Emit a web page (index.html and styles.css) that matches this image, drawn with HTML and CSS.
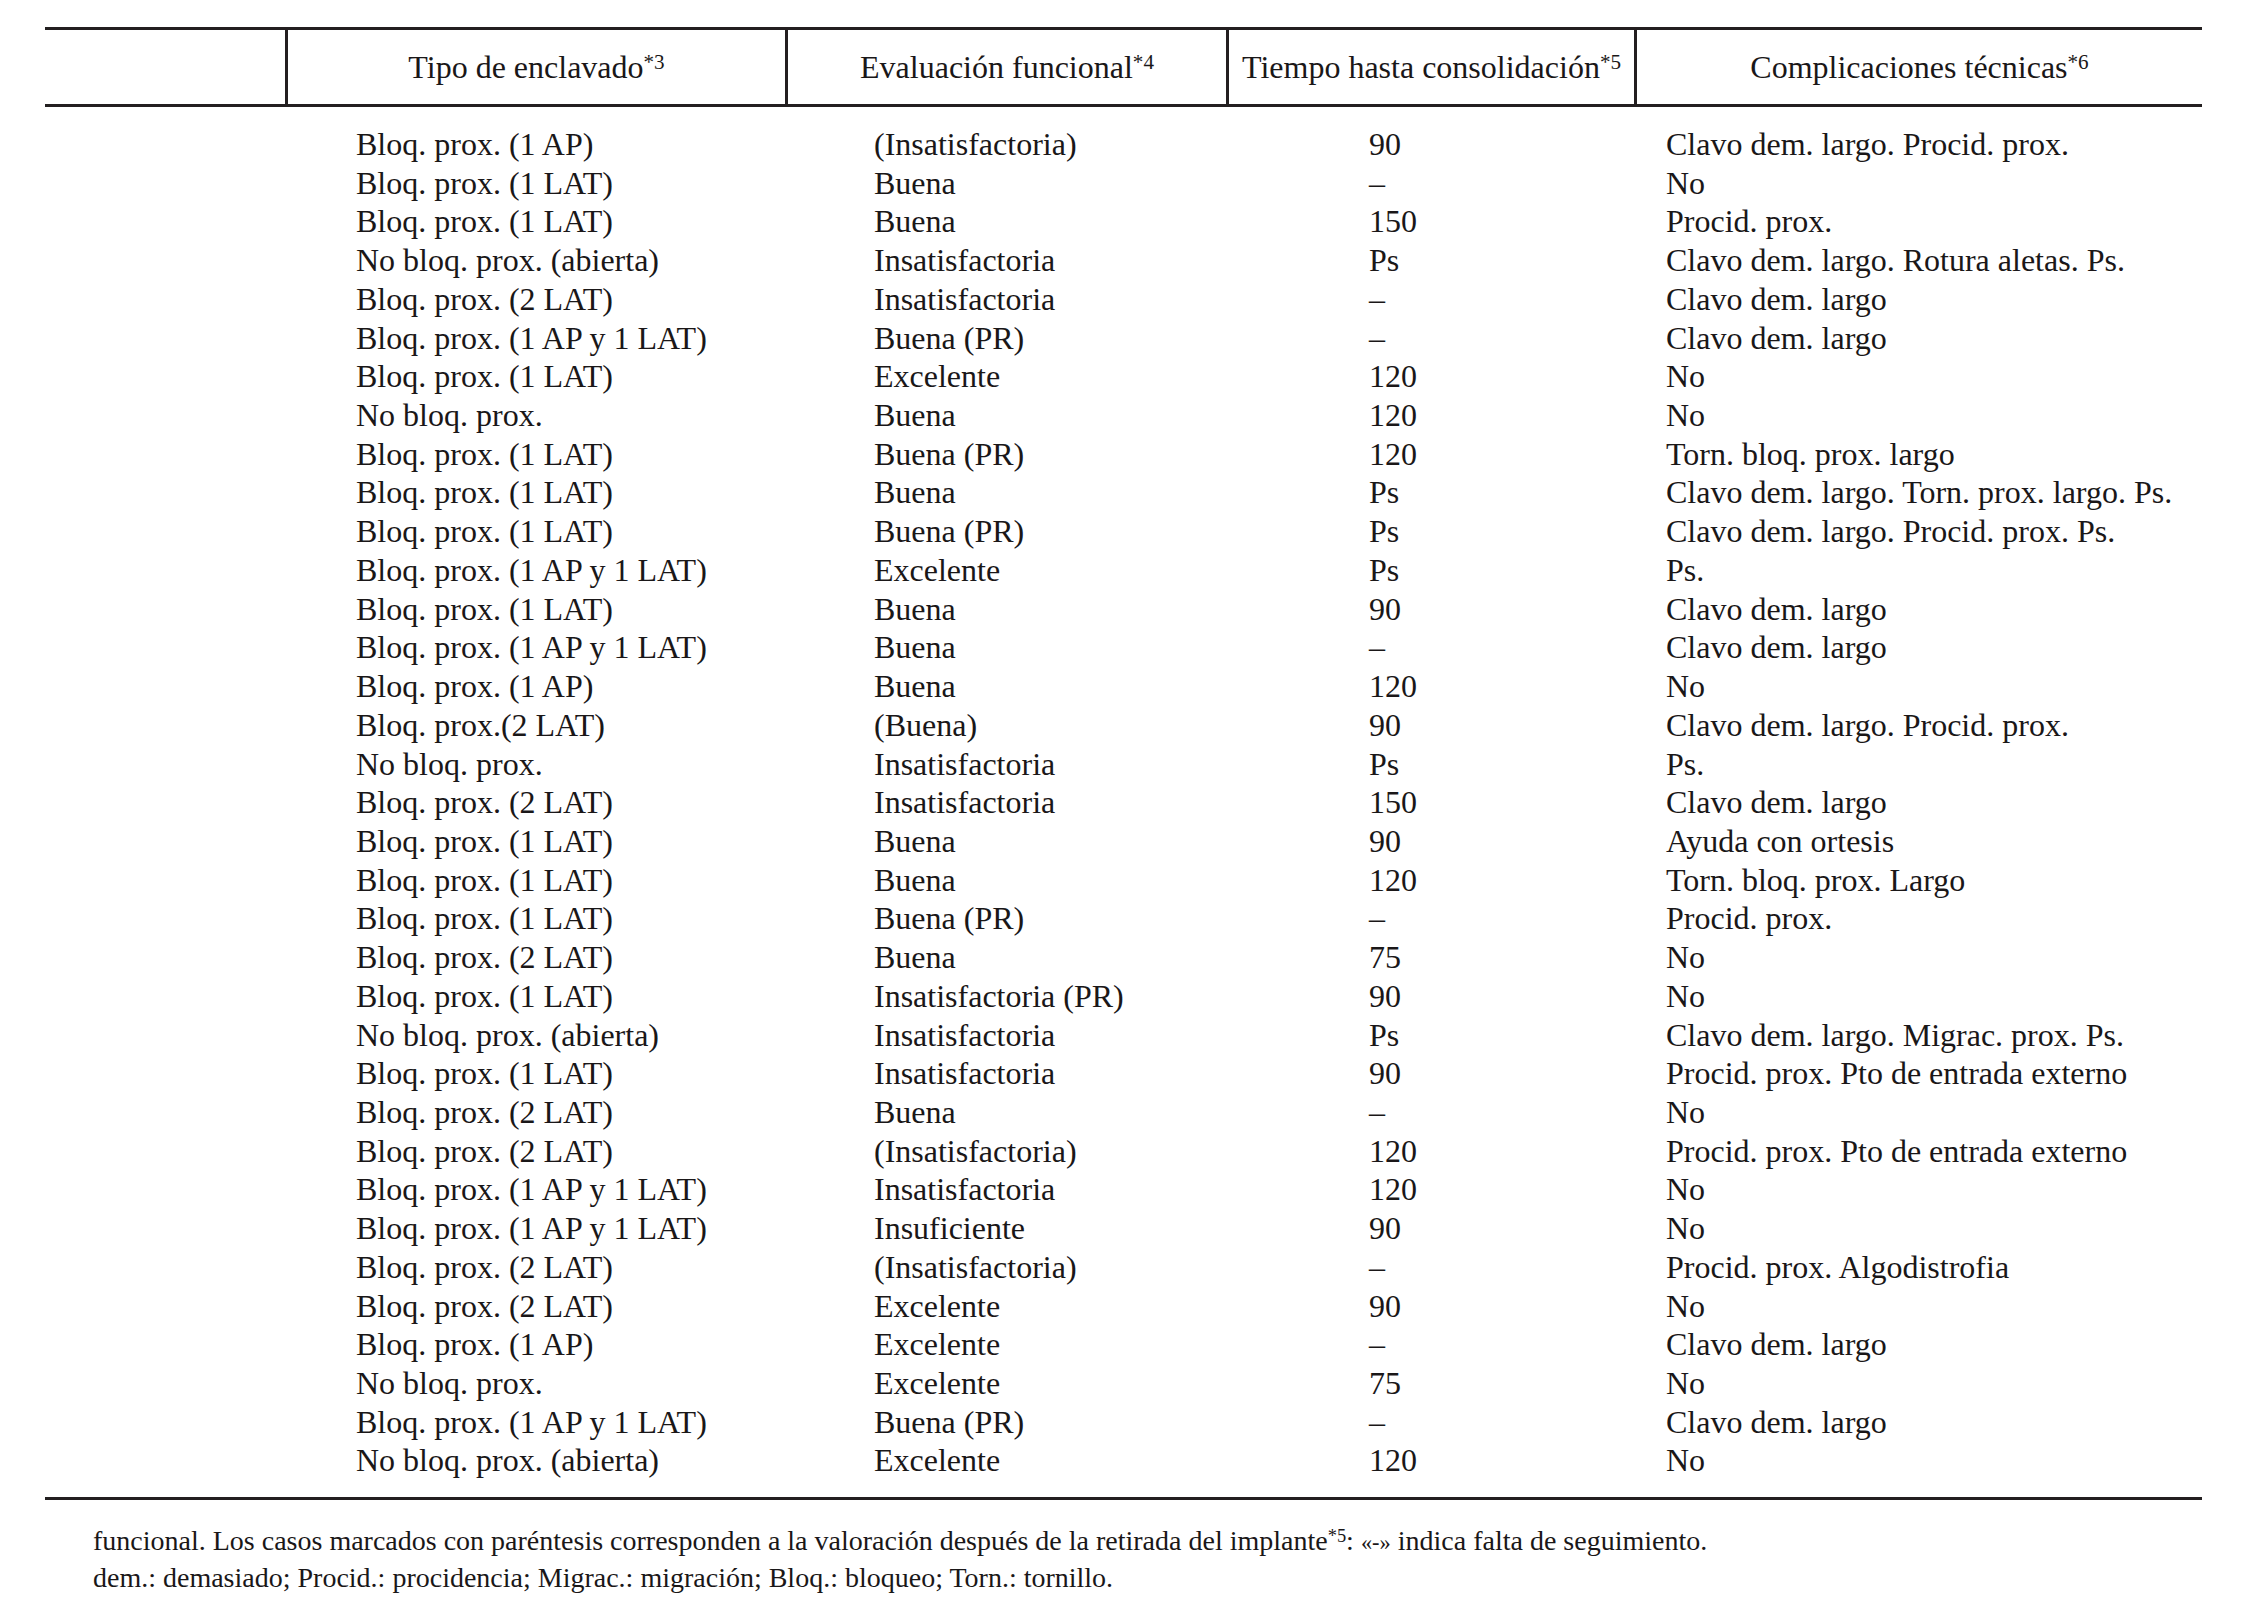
FILE: index.html
```html
<!DOCTYPE html>
<html lang="es">
<head>
<meta charset="utf-8">
<title>Tabla</title>
<link rel="stylesheet" href="styles.css">
</head>
<body>
<div class="page">
  <div class="table">
    <div class="thead">
      <div class="th th-empty"></div>
      <div class="th">Tipo de enclavado<sup>*3</sup></div>
      <div class="th">Evaluación funcional<sup>*4</sup></div>
      <div class="th">Tiempo hasta consolidación<sup>*5</sup></div>
      <div class="th">Complicaciones técnicas<sup>*6</sup></div>
    </div>
    <div class="tbody">
      <div class="tr"><span>Bloq. prox. (1 AP)</span><span>(Insatisfactoria)</span><span>90</span><span>Clavo dem. largo. Procid. prox.</span></div>
      <div class="tr"><span>Bloq. prox. (1 LAT)</span><span>Buena</span><span>–</span><span>No</span></div>
      <div class="tr"><span>Bloq. prox. (1 LAT)</span><span>Buena</span><span>150</span><span>Procid. prox.</span></div>
      <div class="tr"><span>No bloq. prox. (abierta)</span><span>Insatisfactoria</span><span>Ps</span><span>Clavo dem. largo. Rotura aletas. Ps.</span></div>
      <div class="tr"><span>Bloq. prox. (2 LAT)</span><span>Insatisfactoria</span><span>–</span><span>Clavo dem. largo</span></div>
      <div class="tr"><span>Bloq. prox. (1 AP y 1 LAT)</span><span>Buena (PR)</span><span>–</span><span>Clavo dem. largo</span></div>
      <div class="tr"><span>Bloq. prox. (1 LAT)</span><span>Excelente</span><span>120</span><span>No</span></div>
      <div class="tr"><span>No bloq. prox.</span><span>Buena</span><span>120</span><span>No</span></div>
      <div class="tr"><span>Bloq. prox. (1 LAT)</span><span>Buena (PR)</span><span>120</span><span>Torn. bloq. prox. largo</span></div>
      <div class="tr"><span>Bloq. prox. (1 LAT)</span><span>Buena</span><span>Ps</span><span>Clavo dem. largo. Torn. prox. largo. Ps.</span></div>
      <div class="tr"><span>Bloq. prox. (1 LAT)</span><span>Buena (PR)</span><span>Ps</span><span>Clavo dem. largo. Procid. prox. Ps.</span></div>
      <div class="tr"><span>Bloq. prox. (1 AP y 1 LAT)</span><span>Excelente</span><span>Ps</span><span>Ps.</span></div>
      <div class="tr"><span>Bloq. prox. (1 LAT)</span><span>Buena</span><span>90</span><span>Clavo dem. largo</span></div>
      <div class="tr"><span>Bloq. prox. (1 AP y 1 LAT)</span><span>Buena</span><span>–</span><span>Clavo dem. largo</span></div>
      <div class="tr"><span>Bloq. prox. (1 AP)</span><span>Buena</span><span>120</span><span>No</span></div>
      <div class="tr"><span>Bloq. prox.(2 LAT)</span><span>(Buena)</span><span>90</span><span>Clavo dem. largo. Procid. prox.</span></div>
      <div class="tr"><span>No bloq. prox.</span><span>Insatisfactoria</span><span>Ps</span><span>Ps.</span></div>
      <div class="tr"><span>Bloq. prox. (2 LAT)</span><span>Insatisfactoria</span><span>150</span><span>Clavo dem. largo</span></div>
      <div class="tr"><span>Bloq. prox. (1 LAT)</span><span>Buena</span><span>90</span><span>Ayuda con ortesis</span></div>
      <div class="tr"><span>Bloq. prox. (1 LAT)</span><span>Buena</span><span>120</span><span>Torn. bloq. prox. Largo</span></div>
      <div class="tr"><span>Bloq. prox. (1 LAT)</span><span>Buena (PR)</span><span>–</span><span>Procid. prox.</span></div>
      <div class="tr"><span>Bloq. prox. (2 LAT)</span><span>Buena</span><span>75</span><span>No</span></div>
      <div class="tr"><span>Bloq. prox. (1 LAT)</span><span>Insatisfactoria (PR)</span><span>90</span><span>No</span></div>
      <div class="tr"><span>No bloq. prox. (abierta)</span><span>Insatisfactoria</span><span>Ps</span><span>Clavo dem. largo. Migrac. prox. Ps.</span></div>
      <div class="tr"><span>Bloq. prox. (1 LAT)</span><span>Insatisfactoria</span><span>90</span><span>Procid. prox. Pto de entrada externo</span></div>
      <div class="tr"><span>Bloq. prox. (2 LAT)</span><span>Buena</span><span>–</span><span>No</span></div>
      <div class="tr"><span>Bloq. prox. (2 LAT)</span><span>(Insatisfactoria)</span><span>120</span><span>Procid. prox. Pto de entrada externo</span></div>
      <div class="tr"><span>Bloq. prox. (1 AP y 1 LAT)</span><span>Insatisfactoria</span><span>120</span><span>No</span></div>
      <div class="tr"><span>Bloq. prox. (1 AP y 1 LAT)</span><span>Insuficiente</span><span>90</span><span>No</span></div>
      <div class="tr"><span>Bloq. prox. (2 LAT)</span><span>(Insatisfactoria)</span><span>–</span><span>Procid. prox. Algodistrofia</span></div>
      <div class="tr"><span>Bloq. prox. (2 LAT)</span><span>Excelente</span><span>90</span><span>No</span></div>
      <div class="tr"><span>Bloq. prox. (1 AP)</span><span>Excelente</span><span>–</span><span>Clavo dem. largo</span></div>
      <div class="tr"><span>No bloq. prox.</span><span>Excelente</span><span>75</span><span>No</span></div>
      <div class="tr"><span>Bloq. prox. (1 AP y 1 LAT)</span><span>Buena (PR)</span><span>–</span><span>Clavo dem. largo</span></div>
      <div class="tr"><span>No bloq. prox. (abierta)</span><span>Excelente</span><span>120</span><span>No</span></div>
    </div>
  </div>
  <div class="notes">
    <p>funcional. Los casos marcados con paréntesis corresponden a la valoración después de la retirada del implante<sup>*5</sup>: <span class="quote">«-»</span> indica falta de seguimiento.</p>
    <p>dem.: demasiado; Procid.: procidencia; Migrac.: migración; Bloq.: bloqueo; Torn.: tornillo.</p>
  </div>
</div>
</body>
</html>
```

FILE: styles.css
```css
html, body {
  margin: 0;
  padding: 0;
  background: #ffffff;
}

body {
  font-family: "Liberation Serif", "Times New Roman", serif;
  color: #1a1718;
}

.page {
  padding: 27px 0 0 45px;
  width: 2157px;
}

.table {
  border-top: 3px solid #231f20;
  border-bottom: 3px solid #231f20;
}

.thead {
  display: grid;
  grid-template-columns: 240px 500px 441px 408px 568px;
  border-bottom: 3px solid #231f20;
}

.th {
  height: 74px;
  line-height: 74px;
  font-size: 32px;
  text-align: center;
  white-space: nowrap;
  border-left: 3px solid #231f20;
}

.th-empty {
  border-left: none;
}

sup {
  font-size: 0.66em;
  line-height: 0;
  vertical-align: 0.42em;
}

.tbody {
  padding: 18px 0 17px 311px;
}

.tr {
  display: grid;
  grid-template-columns: 518px 495px 297px 1fr;
  font-size: 32px;
  line-height: 38.72px;
  white-space: nowrap;
}

.notes {
  padding: 23px 0 0 48px;
  font-size: 28px;
  line-height: 35px;
}

.notes p {
  margin: 0;
  white-space: nowrap;
}

.quote {
  font-size: 0.8em;
}
```
